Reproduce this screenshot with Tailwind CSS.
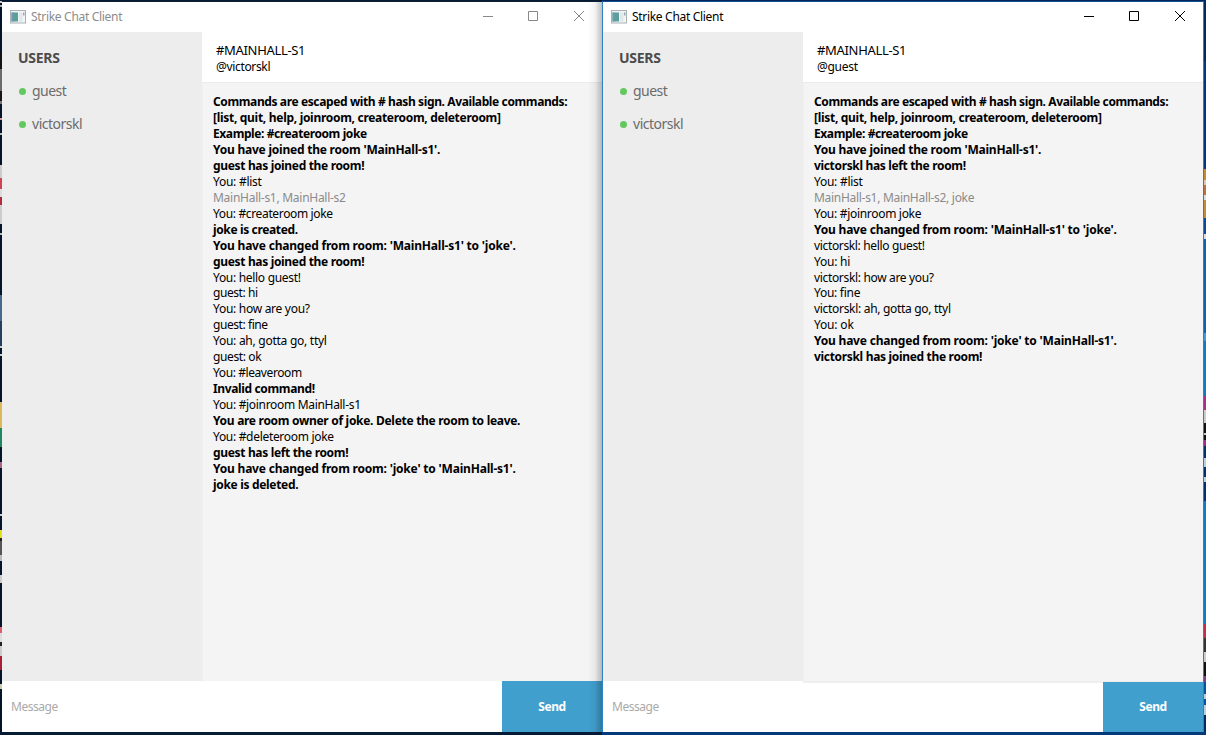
<!DOCTYPE html>
<html lang="en">
<head>
<meta charset="utf-8">
<title>Strike Chat Client</title>
<script src="https://cdn.jsdelivr.net/npm/@tailwindcss/browser@4"></script>
</head>
<body class="w-[1206px] h-[735px] overflow-hidden font-['Noto_Sans','Open_Sans',sans-serif] text-black">
<div class="flex flex-col w-full h-full">
  <div class="flex h-px shrink-0"><div class="w-[602px] bg-[#071a30]"></div><div class="flex-1 bg-[#052458]"></div></div>
  <div class="flex h-[731px] shrink-0">
    <!-- desktop sliver, left -->
    <div id="deskL" class="w-[2px] shrink-0 flex flex-col overflow-hidden bg-[#04152b]"></div>

    <!-- background window -->
    <section class="relative w-[600px] shrink-0 flex flex-col bg-white border-t border-[#0b2038]">
      <div class="h-[30px] shrink-0 flex items-center pl-2">
        <svg class="w-[16px] h-[14px] mb-px" viewBox="0 0 16 14"><rect x=".5" y=".5" width="15" height="12.5" fill="#f1f5f6" stroke="#a9b1b5"/><rect x="1.5" y="2.5" width="6.5" height="9" fill="#58a098"/><rect x="1.5" y="2.5" width="2" height="9" fill="#7398b0"/><rect x="9" y="2.5" width="3.5" height="9" fill="#dfe8ea"/><rect x="13" y="2.5" width="1.5" height="3" fill="#9aa8b0"/></svg>
        <span data-w="91.5" class="ml-[5px] text-[12px] leading-4 text-[#8c8c8c] whitespace-nowrap">Strike Chat Client</span>
        <svg class="ml-auto mr-[16px] mb-[2px] w-[104px] h-[12px]" viewBox="0 0 104 12" fill="none" stroke="#888"><path d="M1 6.5H11M46.5 1.5h9v9h-9zM92 1l10 10M102 1L92 11"/></svg>
      </div>
      <div class="flex flex-1 min-h-0">
        <aside class="w-[200px] bg-[#ededed] pl-4 flex flex-col">
          <h2 class="mt-[16px] h-5 text-[14px] leading-5 font-bold text-[#4c4c4c]"><span data-w="42">USERS</span></h2>
          <div class="mt-[13px] h-5 flex items-center text-[14px] leading-5 text-[#6b6b6b]"><i class="ml-px mr-[6px] w-[7px] h-[7px] rounded-full bg-[#63c95f]"></i><span data-w="34.5">guest</span></div>
          <div class="mt-[13px] h-5 flex items-center text-[14px] leading-5 text-[#6b6b6b]"><i class="ml-px mr-[6px] w-[7px] h-[7px] rounded-full bg-[#63c95f]"></i><span data-w="50.5">victorskl</span></div>
        </aside>
        <main class="flex-1 flex flex-col">
          <header class="h-[51px] shrink-0 bg-white border-b border-[#ebebeb] pl-[14px] pt-[10px]">
            <div class="h-4 text-[13px] leading-4"><span data-w="89.5">#MAINHALL-S1</span></div>
            <div class="h-4 text-[12px] leading-4 mt-px"><span data-w="54.5">@victorskl</span></div>
          </header>
          <div class="flex-1 bg-[#f4f4f4] border-l border-[#efefef] pl-[10px] pt-[11.06px] text-[12px] leading-[15.96px] whitespace-nowrap">
            <p class="font-bold"><span data-w="354.5">Commands are escaped with # hash sign. Available commands:</span></p>
            <p class="font-bold"><span data-w="288">[list, quit, help, joinroom, createroom, deleteroom]</span></p>
            <p class="font-bold"><span data-w="154">Example: #createroom joke</span></p>
            <p class="font-bold"><span data-w="227.5">You have joined the room 'MainHall-s1'.</span></p>
            <p class="font-bold"><span data-w="151.5">guest has joined the room!</span></p>
            <p><span data-w="49">You: #list</span></p>
            <p class="text-[#8b8b8b]"><span data-w="133">MainHall-s1, MainHall-s2</span></p>
            <p><span data-w="120">You: #createroom joke</span></p>
            <p class="font-bold"><span data-w="85">joke is created.</span></p>
            <p class="font-bold"><span data-w="303">You have changed from room: 'MainHall-s1' to 'joke'.</span></p>
            <p class="font-bold"><span data-w="151.5">guest has joined the room!</span></p>
            <p><span data-w="88">You: hello guest!</span></p>
            <p><span data-w="45">guest: hi</span></p>
            <p><span data-w="97">You: how are you?</span></p>
            <p><span data-w="55">guest: fine</span></p>
            <p><span data-w="114">You: ah, gotta go, ttyl</span></p>
            <p><span data-w="48.5">guest: ok</span></p>
            <p><span data-w="89">You: #leaveroom</span></p>
            <p class="font-bold"><span data-w="102">Invalid command!</span></p>
            <p><span data-w="148">You: #joinroom MainHall-s1</span></p>
            <p class="font-bold"><span data-w="307.5">You are room owner of joke. Delete the room to leave.</span></p>
            <p><span data-w="121">You: #deleteroom joke</span></p>
            <p class="font-bold"><span data-w="135.5">guest has left the room!</span></p>
            <p class="font-bold"><span data-w="303">You have changed from room: 'joke' to 'MainHall-s1'.</span></p>
            <p class="font-bold"><span data-w="85.5">joke is deleted.</span></p>
          </div>
        </main>
      </div>
      <footer class="h-[51px] shrink-0 flex bg-white">
        <div class="flex-1 flex items-center pl-[9px] text-[12px] text-[#aaa]"><span data-w="47">Message</span></div>
        <div class="w-[100px] flex items-center justify-center bg-[#419fce] text-white text-[12px] font-bold"><span data-w="28">Send</span></div>
      </footer>
      <!-- shadow cast by the window in front -->
      <div class="absolute right-0 top-0 bottom-0 w-[14px] bg-linear-to-r from-transparent via-black/5 to-black/25"></div>
    </section>

    <!-- active window -->
    <section class="w-[602px] shrink-0 flex flex-col bg-white border-x border-t border-x-[#2b83c6] border-t-[#0b4f96]">
      <div class="h-[30px] shrink-0 flex items-center pl-2">
        <svg class="w-[16px] h-[14px] mb-px" viewBox="0 0 16 14"><rect x=".5" y=".5" width="15" height="12.5" fill="#f1f5f6" stroke="#a9b1b5"/><rect x="1.5" y="2.5" width="6.5" height="9" fill="#58a098"/><rect x="1.5" y="2.5" width="2" height="9" fill="#7398b0"/><rect x="9" y="2.5" width="3.5" height="9" fill="#dfe8ea"/><rect x="13" y="2.5" width="1.5" height="3" fill="#9aa8b0"/></svg>
        <span data-w="91.5" class="ml-[5px] text-[12px] leading-4 whitespace-nowrap">Strike Chat Client</span>
        <svg class="ml-auto mr-[16px] mb-[2px] w-[104px] h-[12px]" viewBox="0 0 104 12" fill="none" stroke="#000"><path d="M1 6.5H11M46.5 1.5h9v9h-9zM92 1l10 10M102 1L92 11"/></svg>
      </div>
      <div class="flex flex-1 min-h-0">
        <aside class="w-[200px] bg-[#ededed] pl-4 flex flex-col">
          <h2 class="mt-[16px] h-5 text-[14px] leading-5 font-bold text-[#4c4c4c]"><span data-w="42">USERS</span></h2>
          <div class="mt-[13px] h-5 flex items-center text-[14px] leading-5 text-[#6b6b6b]"><i class="ml-px mr-[6px] w-[7px] h-[7px] rounded-full bg-[#63c95f]"></i><span data-w="34.5">guest</span></div>
          <div class="mt-[13px] h-5 flex items-center text-[14px] leading-5 text-[#6b6b6b]"><i class="ml-px mr-[6px] w-[7px] h-[7px] rounded-full bg-[#63c95f]"></i><span data-w="50.5">victorskl</span></div>
        </aside>
        <main class="flex-1 flex flex-col">
          <header class="h-[51px] shrink-0 bg-white border-b border-[#ebebeb] pl-[14px] pt-[10px]">
            <div class="h-4 text-[13px] leading-4"><span data-w="89.5">#MAINHALL-S1</span></div>
            <div class="h-4 text-[12px] leading-4 mt-px"><span data-w="41">@guest</span></div>
          </header>
          <div class="flex-1 bg-[#f4f4f4] border-l border-[#efefef] pl-[10px] pt-[11.06px] text-[12px] leading-[15.96px] whitespace-nowrap">
            <p class="font-bold"><span data-w="354.5">Commands are escaped with # hash sign. Available commands:</span></p>
            <p class="font-bold"><span data-w="288">[list, quit, help, joinroom, createroom, deleteroom]</span></p>
            <p class="font-bold"><span data-w="154">Example: #createroom joke</span></p>
            <p class="font-bold"><span data-w="227.5">You have joined the room 'MainHall-s1'.</span></p>
            <p class="font-bold"><span data-w="152">victorskl has left the room!</span></p>
            <p><span data-w="49">You: #list</span></p>
            <p class="text-[#8b8b8b]"><span data-w="160.5">MainHall-s1, MainHall-s2, joke</span></p>
            <p><span data-w="107.5">You: #joinroom joke</span></p>
            <p class="font-bold"><span data-w="303">You have changed from room: 'MainHall-s1' to 'joke'.</span></p>
            <p><span data-w="111">victorskl: hello guest!</span></p>
            <p><span data-w="36.5">You: hi</span></p>
            <p><span data-w="120">victorskl: how are you?</span></p>
            <p><span data-w="46.5">You: fine</span></p>
            <p><span data-w="137">victorskl: ah, gotta go, ttyl</span></p>
            <p><span data-w="40">You: ok</span></p>
            <p class="font-bold"><span data-w="303">You have changed from room: 'joke' to 'MainHall-s1'.</span></p>
            <p class="font-bold"><span data-w="168.5">victorskl has joined the room!</span></p>
          </div>
        </main>
      </div>
      <footer class="h-[51px] shrink-0 flex bg-white">
        <div class="w-[200px] flex items-center pl-[9px] text-[12px] text-[#aaa]"><span data-w="47">Message</span></div>
        <div class="flex-1 flex border-t border-[#ededed]">
          <div class="flex-1 border-t border-[#f0f0f0]"></div>
          <div class="w-[100px] pb-px flex items-center justify-center bg-[#419fce] text-white text-[12px] font-bold"><span data-w="28">Send</span></div>
        </div>
      </footer>
    </section>

    <!-- desktop sliver, right -->
    <div id="deskR" class="w-[2px] shrink-0 flex flex-col overflow-hidden bg-[#04295f]"></div>
  </div>
  <div class="flex flex-1"><div class="w-[602px] bg-[#061c36]"></div><div class="flex-1 bg-[#043a7a]"></div></div>
</div>
<script>
  // Spread each label over its measured width, once the styles are in.
  function fit() {
    document.querySelectorAll('[data-w]').forEach(function (el) {
      el.style.letterSpacing = '0px';
      var r = document.createRange();
      r.selectNodeContents(el);
      var natural = r.getBoundingClientRect().width;
      el.style.letterSpacing = ((+el.dataset.w - 0.3 - natural) / el.textContent.length) + 'px';
    });
  }
  window.addEventListener('load', function () {
    fit();
    requestAnimationFrame(fit);
    document.fonts.ready.then(fit);
    setTimeout(fit, 60);
  });
  // Slivers of wallpaper and desktop icons: [height, colour] from the top.
  function bands(id, list) {
    var host = document.getElementById(id);
    list.forEach(function (b) {
      var d = document.createElement('div');
      d.style.height = b[0] + 'px';
      d.style.flexShrink = 0;
      d.style.background = b[1];
      host.appendChild(d);
    });
  }
  bands('deskL', [[2,'#ccc'],[2,'#04152b'],[2,'#aaa'],[46,'#04152b'],[16,'#15130f'],[22,'#6b6b6b'],[10,'#1b1411'],[3,'#777'],[14,'#04152b'],[2,'#c99'],[13,'#04152b'],[2,'#bbb'],[30,'#04152b'],[13,'#ccc'],[11,'#cf4455'],[8,'#ddd'],[8,'#b02c40'],[19,'#ccc'],[9,'#04152b'],[2,'#bbb'],[60,'#04152b'],[26,'#49698c'],[25,'#253f5e'],[2,'#ccc'],[6,'#04152b'],[2,'#ccc'],[46,'#04152b'],[26,'#dab85c'],[19,'#1f8760'],[15,'#04152b'],[6,'#a68'],[46,'#04152b'],[2,'#ccc'],[14,'#04152b'],[8,'#e0e020'],[3,'#222'],[14,'#555'],[6,'#bbb'],[14,'#04152b'],[8,'#ccc'],[44,'#04152b'],[6,'#d8606f'],[9,'#ddd'],[4,'#222'],[10,'#ccc'],[14,'#a71e36'],[14,'#04152b'],[5,'#cca']]);
  bands('deskR', [[60,'#04295f'],[108,'#05377c'],[11,'#c98a35'],[5,'#d8c8b8'],[10,'#c07040'],[5,'#ddd'],[18,'#c98a35'],[16,'#0a4a98'],[5,'#ddd'],[94,'#0d62b0'],[8,'#3e9bd8'],[55,'#1379c4'],[14,'#aa2f86'],[13,'#ccc'],[10,'#111'],[2,'#ccc'],[5,'#111'],[6,'#9a2f86'],[12,'#03306e'],[9,'#bcd'],[10,'#03306e'],[5,'#bcd'],[19,'#03306e'],[123,'#1379c4'],[14,'#c0304e'],[14,'#333'],[10,'#ccc'],[14,'#111'],[6,'#7a3f86'],[12,'#0355a5'],[5,'#bcd'],[6,'#0355a5'],[10,'#bcd']]);
</script>
</body>
</html>
